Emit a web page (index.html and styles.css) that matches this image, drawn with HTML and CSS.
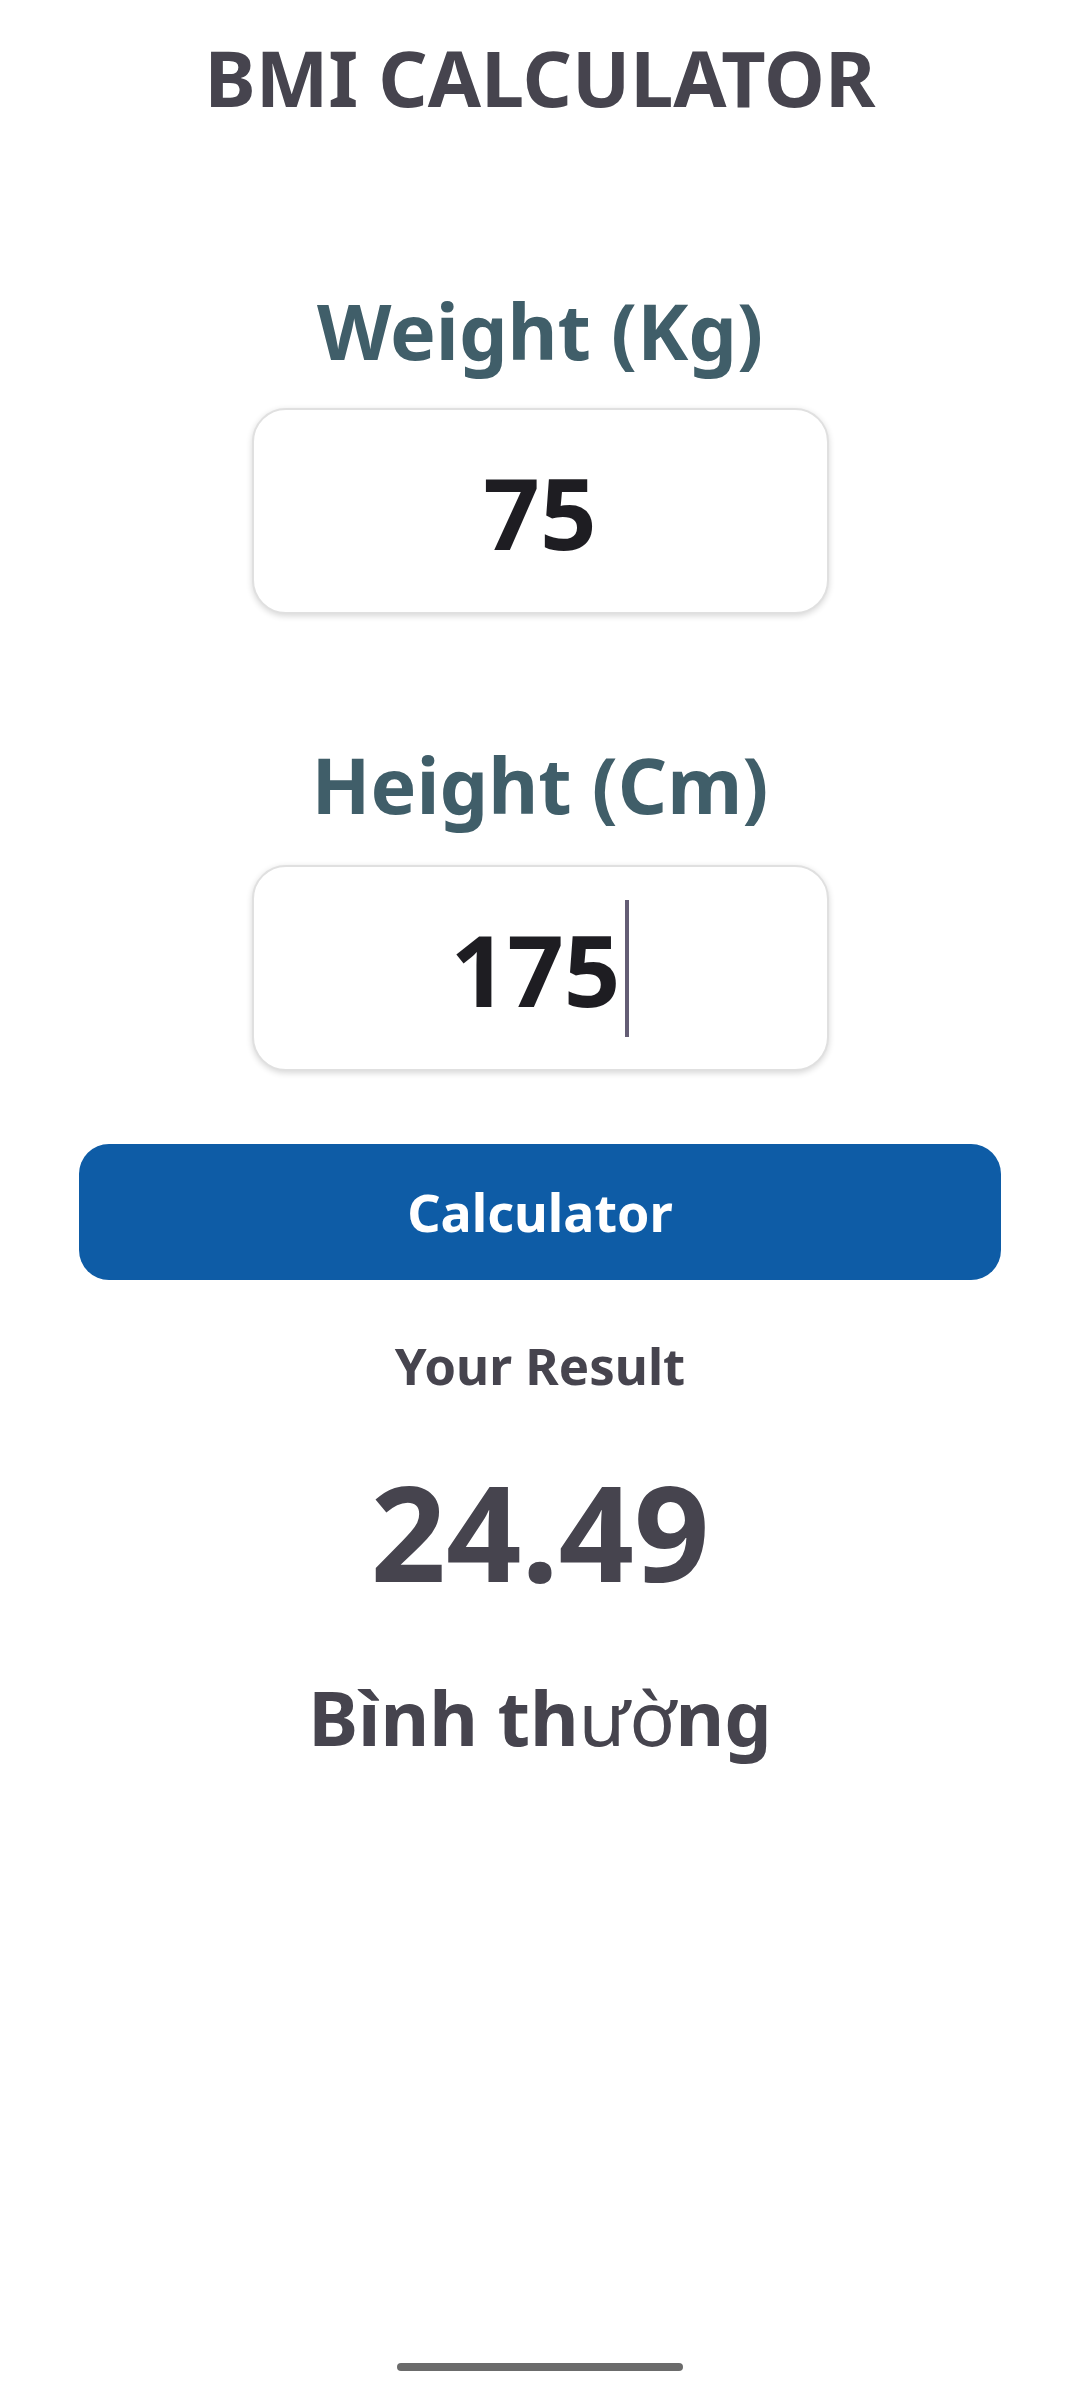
FILE: index.html
```html
<!DOCTYPE html>
<html lang="vi">
<head>
<meta charset="utf-8">
<title>BMI Calculator</title>
<link rel="stylesheet" href="styles.css">
</head>
<body>
<div class="screen">
  <main class="app">
    <h1 class="title">BMI CALCULATOR</h1>

    <section class="field field-weight">
      <label class="field-label">Weight (Kg)</label>
      <div class="input-box"><span class="input-value">75</span></div>
    </section>

    <section class="field field-height">
      <label class="field-label">Height (Cm)</label>
      <div class="input-box"><span class="input-value">175</span><span class="caret"></span></div>
    </section>

    <button class="calc-btn">Calculator</button>

    <div class="result-label">Your Result</div>
    <div class="result-value">24.49</div>
    <div class="result-status">Bình th<span class="fallback">ườ</span>ng</div>
  </main>
  <div class="home-indicator"></div>
</div>
</body>
</html>
```
FILE: styles.css
```css
* { box-sizing: border-box; }
html, body { margin: 0; padding: 0; background: #ffffff; }
body { font-family: "Noto Sans", "Open Sans", sans-serif; }

.screen {
  width: 1080px;
  height: 2400px;
  display: flex;
  flex-direction: column;
  align-items: center;
}

.app {
  width: 100%;
  display: flex;
  flex-direction: column;
  align-items: center;
  padding-top: 39px;
}

.title {
  margin: 0;
  font-size: 77px;
  line-height: 1;
  font-weight: 700;
  color: #46444e;
}

.field {
  display: flex;
  flex-direction: column;
  align-items: center;
}
.field-weight { margin-top: 176px; }
.field-height { margin-top: 132px; }

.field-label {
  font-size: 77px;
  line-height: 1;
  font-weight: 700;
  color: #405e69;
}

.field-weight .input-box { margin-top: 39px; }
.field-height .input-box { margin-top: 42px; }

.input-box {
  width: 577px;
  height: 206px;
  border: 2px solid #e0e0e0;
  border-radius: 34px;
  background: #ffffff;
  box-shadow: 0 2px 6px rgba(0, 0, 0, 0.16);
  display: flex;
  align-items: center;
  justify-content: center;
}

.input-value {
  font-size: 99px;
  line-height: 1;
  font-weight: 700;
  color: #1e1d22;
}

.caret {
  width: 4px;
  height: 137px;
  margin-left: 5px;
  background: #645d75;
}

.calc-btn {
  margin-top: 73px;
  width: 922px;
  height: 136px;
  border: none;
  border-radius: 30px;
  background: #0e5ca6;
  color: #ffffff;
  font-family: inherit;
  font-size: 52px;
  font-weight: 700;
  line-height: 1;
  padding: 0;
}

.result-label {
  margin-top: 60px;
  font-size: 51px;
  line-height: 1;
  font-weight: 700;
  color: #46444e;
}

.result-value {
  margin-top: 74px;
  font-size: 132px;
  line-height: 1;
  font-weight: 700;
  color: #46444e;
}

.result-status {
  margin-top: 83px;
  font-size: 75px;
  line-height: 1;
  font-weight: 700;
  color: #46444e;
}
.result-status .fallback { font-weight: 400; }

.home-indicator {
  margin-top: auto;
  margin-bottom: 29px;
  width: 286px;
  height: 8px;
  border-radius: 4px;
  background: #6b6b6b;
}
```
